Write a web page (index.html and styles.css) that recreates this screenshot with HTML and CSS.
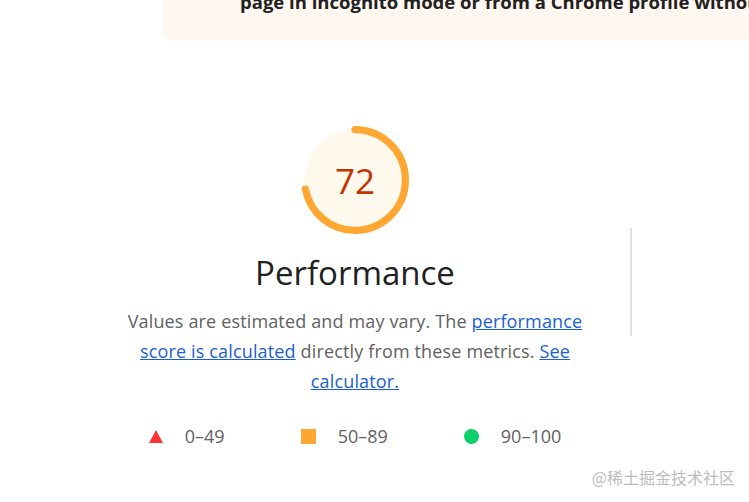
FILE: index.html
```html
<!DOCTYPE html>
<html lang="en">
<head>
<meta charset="utf-8">
<title>Performance</title>
<link rel="stylesheet" href="styles.css">
</head>
<body>
<div class="warning">
  <p class="warning-text">page in incognito mode or from a Chrome profile without extensions.</p>
</div>
<main class="scores">
  <section class="category">
    <div class="gauge">
      <svg class="gauge-svg" viewBox="0 0 120 120" width="108" height="108">
        <circle class="gauge-base" cx="60" cy="60" r="56"></circle>
        <circle class="gauge-arc" cx="60" cy="60" r="56" stroke-dasharray="253.3 351.86" transform="rotate(-90 60 60)"></circle>
      </svg>
      <span class="gauge-value">72</span>
    </div>
    <h2 class="category-title">Performance</h2>
    <p class="category-desc">Values are estimated and may vary. The <a href="#">performance score is calculated</a> directly from these metrics. <a href="#">See calculator.</a></p>
    <div class="scale">
      <span class="scale-item"><span class="icon icon-fail"></span>0–49</span>
      <span class="scale-item"><span class="icon icon-average"></span>50–89</span>
      <span class="scale-item"><span class="icon icon-pass"></span>90–100</span>
    </div>
  </section>
  <div class="divider"></div>
  <section class="screenshot"></section>
</main>
<div class="watermark">@稀土掘金技术社区</div>
</body>
</html>
```
FILE: styles.css
```css
* { box-sizing: border-box; }
html, body { margin: 0; padding: 0; }
body {
  width: 749px;
  height: 502px;
  overflow: hidden;
  background: #ffffff;
  font-family: "Open Sans", "Noto Sans", "Noto Sans CJK SC", sans-serif;
  position: relative;
}
.warning {
  margin-left: 163px;
  margin-top: -10px;
  height: 50px;
  background: #fff7f0;
  border-radius: 0 0 0 10px;
  padding: 0 0 0 77px;
  overflow: hidden;
}
.warning-text {
  margin: 0;
  font-size: 18.5px;
  line-height: 24px;
  font-weight: 700;
  color: #212121;
  white-space: nowrap;
}
.scores {
  display: flex;
  align-items: flex-start;
  padding-top: 86px;
}
.category {
  width: 500px;
  margin-left: 105px;
  display: flex;
  flex-direction: column;
  align-items: center;
}
.gauge {
  position: relative;
  width: 108px;
  height: 108px;
}
.gauge-svg { display: block; }
.gauge-base {
  fill: #fff8ec;
  stroke: none;
}
.gauge-arc {
  fill: none;
  stroke: #ffa733;
  stroke-width: 8;
  stroke-linecap: round;
}
.gauge-value {
  position: absolute;
  inset: 0;
  display: flex;
  align-items: center;
  justify-content: center;
  font-size: 35px;
  color: #c33300;
  line-height: 1;
}
.category-title {
  margin: 17px 0 0;
  font-size: 33px;
  font-weight: 400;
  line-height: 44px;
  color: #212121;
}
.category-desc {
  margin: 11px 0 0;
  width: 480px;
  text-align: center;
  font-size: 18px;
  letter-spacing: 0.15px;
  line-height: 30px;
  color: #616161;
}
.category-desc a {
  color: #1a5fd2;
  text-decoration: underline;
}
.scale {
  margin-top: 28px;
  display: flex;
  gap: 76px;
  font-size: 18px;
  line-height: 24px;
  color: #616161;
}
.scale-item {
  display: flex;
  align-items: center;
  gap: 22px;
}
.icon { display: block; }
.icon-fail {
  width: 0;
  height: 0;
  border-left: 7px solid transparent;
  border-right: 7px solid transparent;
  border-bottom: 13px solid #ff3333;
}
.icon-average {
  width: 15px;
  height: 15px;
  background: #ffa733;
}
.icon-pass {
  width: 15px;
  height: 15px;
  border-radius: 50%;
  background: #0cce6b;
}
.divider {
  margin-top: 102px;
  margin-left: 25px;
  width: 2px;
  height: 108px;
  background: #e0e0e0;
}
.screenshot { flex: 1; }
.watermark {
  position: absolute;
  right: 14px;
  bottom: 15px;
  font-size: 16px;
  line-height: 20px;
  color: #bdbdbd;
  font-family: "Noto Sans CJK SC", "Noto Sans", sans-serif;
}
```
